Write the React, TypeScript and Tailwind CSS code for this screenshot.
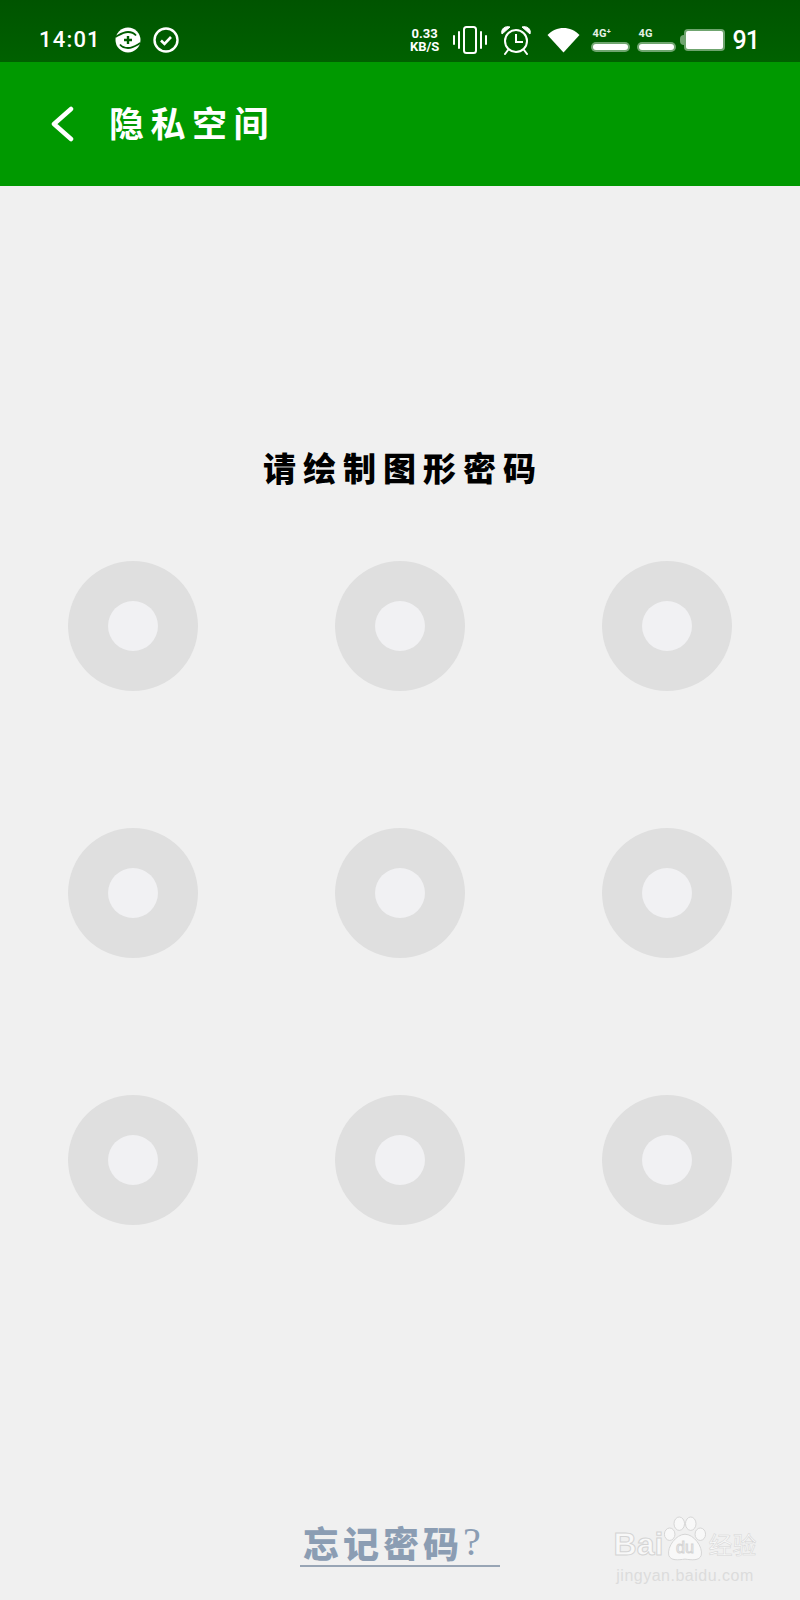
import React from 'react';

const dots = [1, 2, 3, 4, 5, 6, 7, 8, 9];

const SyncIcon = () => (
  <svg width="26" height="26" viewBox="0 0 26 26" fill="none">
    <circle cx="13" cy="13" r="12.500" fill="white" />
    <path d="M0.500 10C5 7.500 8 5 13 5C16 5 19 6 21 8.500" stroke="#005c00" strokeWidth="1.800" />
    <path d="M25.500 16C21 18.500 18 21 13 21C10 21 7 20 5 17.500" stroke="#005c00" strokeWidth="1.800" />
    <path d="M13 9V17M9 13H17" stroke="#005c00" strokeWidth="2.400" />
  </svg>
);

const CheckIcon = () => (
  <svg width="26" height="26" viewBox="0 0 26 26" fill="none" stroke="white">
    <circle cx="13" cy="13" r="11.500" strokeWidth="2.400" />
    <path d="M8 13.500L11.500 17L18 10" strokeWidth="2.600" />
  </svg>
);

const VibrateIcon = () => (
  <svg width="36" height="30" viewBox="0 0 36 30" fill="none" stroke="white" strokeLinecap="round">
    <rect x="12" y="2" width="12" height="26" rx="2.500" strokeWidth="2" />
    <path d="M7 7V23M29 7V23" strokeWidth="2" />
    <path d="M2 11V19M34 11V19" strokeWidth="2" />
  </svg>
);

const AlarmIcon = () => (
  <svg width="32" height="30" viewBox="0 0 32 30" fill="none" stroke="white" strokeWidth="2">
    <circle cx="16" cy="16" r="11" />
    <path d="M16 9V17H23" />
    <path d="M8 25L5 29M24 25L27 29" strokeLinecap="round" />
    <path d="M2 9C0.500 4 5 0.500 10 2Z" fill="white" strokeWidth="1" />
    <path d="M30 9C31.500 4 27 0.500 22 2Z" fill="white" strokeWidth="1" />
  </svg>
);

const WifiIcon = () => (
  <svg width="33" height="26" viewBox="0 0 33 26" fill="white">
    <path d="M0.500 8C9 -1.500 24 -1.500 32.500 8L16.500 25.500Z" />
  </svg>
);

const BackIcon = () => (
  <svg width="24" height="36" viewBox="0 0 24 36" fill="none" stroke="white" strokeWidth="4.500" strokeLinecap="round" strokeLinejoin="round">
    <path d="M21 3L4 18L21 33" />
  </svg>
);

const SignalBar = ({ label }: { label: string }) => (
  <div className="flex w-[39px] flex-col">
    <span className="pl-0.5 text-[11px] leading-[11px] font-bold text-[#e4f0e4]">{label}</span>
    <div className="mt-[3px] h-[10px] rounded-full bg-[#6fa56f] p-[2px]">
      <div className="h-full rounded-full bg-white" />
    </div>
  </div>
);

const StatusBar = () => (
  <div className="flex h-[62px] items-center justify-between bg-gradient-to-b from-[#005400] to-[#006100] pr-[41px] pl-[39px] pt-[18px] font-['Roboto',sans-serif] text-white">
    <div className="flex items-center">
      <span className="w-[62px] text-[22px] leading-none font-medium tracking-[1.2px]">14:01</span>
      <div className="ml-[14px] flex gap-[12px]">
        <SyncIcon />
        <CheckIcon />
      </div>
    </div>
    <div className="flex items-center">
      <div className="flex w-[34px] flex-col items-center text-[13px] leading-[13px] font-bold">
        <span>0.33</span>
        <span>KB/S</span>
      </div>
      <div className="ml-[10px]">
        <VibrateIcon />
      </div>
      <div className="ml-[12px]">
        <AlarmIcon />
      </div>
      <div className="ml-[15px]">
        <WifiIcon />
      </div>
      <div className="ml-[11px] flex gap-[7px]">
        <SignalBar label="4G⁺" />
        <SignalBar label="4G" />
      </div>
      <div className="ml-[4px] flex items-center">
        <div className="h-[10px] w-[4px] rounded-l-sm bg-[#6fa56f]" />
        <div className="h-[22px] w-[41px] rounded-[4px] bg-[#6fa56f] p-[2px]">
          <div className="h-full rounded-[2px] bg-white" />
        </div>
      </div>
      <span className="ml-[8px] text-[25px] leading-none font-medium tracking-[-1px]">91</span>
    </div>
  </div>
);

const BaiduMark = () => (
  <div className="absolute top-[1513px] left-[612px] flex w-[146px] flex-col items-center text-[#f8f8f8]">
    <div className="flex h-[50px] items-end">
      <span className="font-['Liberation_Sans',sans-serif] text-[32px] leading-[38px] font-bold [-webkit-text-stroke:1px_#d4d4d4]">Bai</span>
      <svg width="44" height="48" viewBox="0 0 46 48" fill="#f8f8f8" stroke="#d4d4d4" strokeWidth="1">
        <ellipse cx="17" cy="8" rx="5.500" ry="7" />
        <ellipse cx="29" cy="8" rx="5.500" ry="7" />
        <ellipse cx="7" cy="19" rx="5.500" ry="6.500" />
        <ellipse cx="39" cy="19" rx="5.500" ry="6.500" />
        <path d="M23 19C32 19 42 32 40 41C38 47 30 46 23 45C16 46 8 47 6 41C4 32 14 19 23 19Z" />
        <text x="23" y="39" textAnchor="middle" fontSize="17" fontFamily="Liberation Sans" fill="none" stroke="#d4d4d4">du</text>
      </svg>
      <span className="ml-px font-['Noto_Sans_CJK_SC',sans-serif] text-[24px] leading-[38px] font-normal [-webkit-text-stroke:0.5px_#d4d4d4]">经验</span>
    </div>
    <span className="mt-[4px] font-['Liberation_Sans',sans-serif] text-[16px] leading-[18px] tracking-[0.5px] text-[#dcdcdc]">jingyan.baidu.com</span>
  </div>
);

export default function App() {
  return (
    <div className="relative flex h-[1600px] w-[800px] flex-col overflow-hidden bg-[#f0f0f0] font-['Noto_Sans_CJK_SC',sans-serif]">
      <StatusBar />
      <div className="flex h-[124px] items-center bg-[#009900] pb-[5px] pl-[50px] text-white">
        <div className="mt-[4px]">
          <BackIcon />
        </div>
        <h1 className="ml-[35px] text-[35px] leading-none font-bold tracking-[6.500px]">隐私空间</h1>
      </div>
      <p className="mt-[261px] pl-[6px] text-center text-[33px] leading-[40px] font-black tracking-[7px] text-black">请绘制图形密码</p>
      <div className="mt-[5px] grid grid-cols-3">
        {dots.map((dot) => (
          <div key={dot} className="flex h-[267px] items-center justify-center">
            <div className="flex h-[130px] w-[130px] items-center justify-center rounded-full bg-[#dfdfdf]">
              <div className="h-[50px] w-[50px] rounded-full bg-[#f1f1f3]" />
            </div>
          </div>
        ))}
      </div>
      <div className="mt-auto mb-[33px] flex justify-center">
        <div className="flex w-[200px] items-end border-b-2 border-[#98a5b5] pb-[3px] pl-[3px] text-[#8b9db3]">
          <span className="text-[36px] leading-[40px] font-black tracking-[4px]">忘记密码</span>
          <span className="font-['Liberation_Serif',serif] text-[40px] leading-[40px]">?</span>
        </div>
      </div>
      <BaiduMark />
    </div>
  );
}
